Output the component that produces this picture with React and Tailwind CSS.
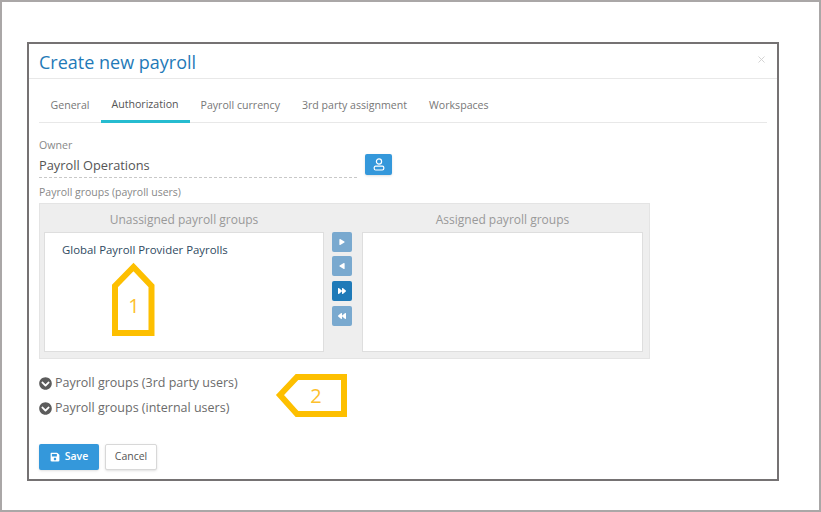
import { X } from 'lucide-react';
import { FaPlay, FaForward, FaBackward, FaChevronCircleDown, FaSave } from 'react-icons/fa';

const tabs = ['General', 'Authorization', 'Payroll currency', '3rd party assignment', 'Workspaces'];

function MoveButton({ children, active, className = '' }) {
  return (
    <div className={`w-5 h-5 rounded-[2px] flex items-center justify-center text-white ${active ? 'bg-[#1f7ab8]' : 'bg-[#79a9cf]'} ${className}`}>
      {children}
    </div>
  );
}

function ListBox({ title, className = 'w-[280px]', children }) {
  return (
    <div className={`flex flex-col ${className}`}>
      <div className="h-[28px] pt-[4px] flex items-center justify-center text-[12px] text-[#999]">{title}</div>
      <div className="h-[120px] bg-white border border-[#dedede]">{children}</div>
    </div>
  );
}

function Section({ label }) {
  return (
    <div className="flex items-center h-[25px] text-[12.5px] text-[#6b6b6b]">
      <FaChevronCircleDown size={13} className="text-[#5c5c5c] mr-[3px]" />
      <span>{label}</span>
    </div>
  );
}

export default function App() {
  return (
    <div className="relative w-[821px] h-[512px] bg-white border-2 border-[#aaa7a7] pt-[40px] pl-[25px] overflow-hidden font-['Open_Sans',sans-serif]">
      {/* Dialog */}
      <div className="w-[752px] h-[439px] border-2 border-[#757273] bg-white">
        <div className="h-[35px] border-b border-[#e8e8e8] flex items-center justify-between pl-[10px] pr-[10px]">
          <h2 className="text-[18px] text-[#1f7ab8] leading-none mt-[1px]">Create new payroll</h2>
          <X size={11} className="text-[#d0d0d0] mb-[4px]" />
        </div>
        <div className="px-[10px]">
          {/* Tabs */}
          <div className="mt-[9px] w-[728px] h-[35px] pl-[0.5px] flex border-b border-[#e8e8e8]">
            {tabs.map((t) => (
              <div key={t} className={`h-[35px] px-[11px] flex items-center text-[10.6px] pt-[1px] ${t === 'Authorization' ? 'text-[#555] border-b-[3px] border-[#26bcd0]' : 'text-[#777]'}`}>
                {t}
              </div>
            ))}
          </div>

          {/* Owner */}
          <div className="mt-[15px] text-[10.6px] leading-[15px] text-[#888]">Owner</div>
          <div className="flex items-start">
            <div className="w-[318px] h-[25px] border-b border-dashed border-[#c8c8c8] text-[12.8px] text-[#555] leading-[24px]">Payroll Operations</div>
            <button className="ml-[8px] mt-[1px] w-[27px] h-[21px] rounded-[2px] bg-[#3498db] shadow-sm flex items-center justify-center text-white">
              <svg width="12" height="13" viewBox="0 0 12 13" fill="none" stroke="currentColor" strokeWidth="1.2">
                <circle cx="6" cy="3.5" r="2.6" />
                <rect x="1.2" y="8.2" width="9.6" height="3.8" rx="1.4" />
              </svg>
            </button>
          </div>
          <div className="mt-[7px] text-[10.5px] leading-[15px] text-[#888]">Payroll groups (payroll users)</div>

          {/* Assignment panel */}
          <div className="mt-[3px] w-[611px] h-[156px] bg-[#eeeeee] border border-[#e4e4e4] pl-[4px] flex">
            <ListBox title="Unassigned payroll groups">
              <div className="pl-[17px] pt-[9px] text-[11.4px] leading-[16px] text-[#2f4a5f]">Global Payroll Provider Payrolls</div>
            </ListBox>
            <div className="ml-[8px] mr-[10px] pt-[28px] flex flex-col">
              <MoveButton><FaPlay size={6} /></MoveButton>
              <MoveButton className="mt-[4px]"><FaPlay size={6} className="rotate-180" /></MoveButton>
              <MoveButton active className="mt-[5px]"><FaForward size={8} /></MoveButton>
              <MoveButton className="mt-[5px]"><FaBackward size={8} /></MoveButton>
            </div>
            <ListBox title="Assigned payroll groups" className="w-[281px]" />
          </div>

          {/* Collapsed sections */}
          <div className="mt-[12px]">
            <Section label="Payroll groups (3rd party users)" />
            <Section label="Payroll groups (internal users)" />
          </div>

          {/* Footer */}
          <div className="mt-[23px] flex gap-[6px]">
            <button className="w-[60px] h-[26px] rounded-[2px] bg-[#3498db] text-white text-[10.5px] font-semibold flex items-center justify-center gap-[5px] shadow-sm">
              <FaSave size={10} /> Save
            </button>
            <button className="w-[52px] h-[26px] rounded-[2px] bg-white border border-[#d8d8d8] text-[#555] text-[10.5px] flex items-center justify-center shadow-sm">
              Cancel
            </button>
          </div>
        </div>
      </div>

      {/* Callouts */}
      <svg className="absolute left-[108px] top-[259px]" width="47" height="77" viewBox="0 0 47 77">
        <path d="M23.5 6 L41.5 25 V72 H5 V25 Z" fill="none" stroke="#fdbf00" strokeWidth="6" />
      </svg>
      <div className="absolute left-[125px] top-[291px] w-[14px] text-center text-[20px] leading-[26px] text-[#fdbf2d]">1</div>
      <svg className="absolute left-[271px] top-[372px]" width="74" height="45" viewBox="0 0 74 45">
        <path d="M7 21 L24 3 H71 V40 H24 Z" fill="none" stroke="#fdbf00" strokeWidth="6" />
      </svg>
      <div className="absolute left-[306px] top-[381px] w-[16px] text-center text-[20px] leading-[26px] text-[#fdbf2d]">2</div>
    </div>
  );
}
